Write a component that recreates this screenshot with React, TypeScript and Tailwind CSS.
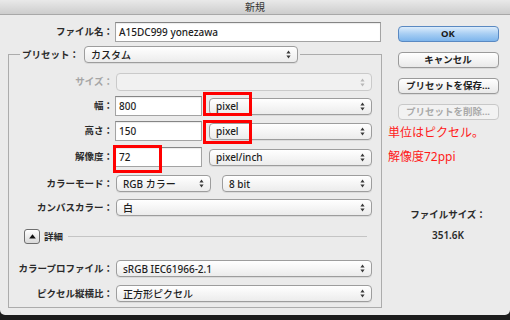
import React from "react";

const Arrows = ({ disabled }: { disabled?: boolean }) => (
  <svg width="5" height="9" viewBox="0 0 5 9" className="shrink-0">
    <path d="M2.5 0.6 L4.6 3.6 H0.4Z M2.5 8.4 L4.6 5.4 H0.4Z" fill={disabled ? "#b8b8b8" : "#3a3a3a"} />
  </svg>
);

const Label = ({ className, children }: { className: string; children: React.ReactNode }) => (
  <span className={`shrink-0 whitespace-nowrap text-[9.5px] font-semibold leading-none ${className}`}>{children}</span>
);

const Select = ({ className, children, disabled }: { className: string; children?: React.ReactNode; disabled?: boolean }) => (
  <div
    className={`flex shrink-0 items-center rounded-[4px] border pl-[6px] pr-[6px] ${
      disabled
        ? "border-[#cacaca] bg-[#f1f1f1]"
        : "border-[#9d9d9d] bg-gradient-to-b from-white to-[#ececec] shadow-[0_1px_0_rgba(0,0,0,0.07)]"
    } ${className}`}
  >
    <span className="flex-1 whitespace-nowrap text-[10px] font-medium leading-none text-[#1e1e1e]">{children}</span>
    <Arrows disabled={disabled} />
  </div>
);

const Input = ({ className, children }: { className: string; children: React.ReactNode }) => (
  <div
    className={`flex shrink-0 items-center border border-[#a3a3a3] border-t-[#858585] bg-white pl-[3px] text-[10px] font-medium leading-none text-[#1e1e1e] shadow-[inset_0_1px_1px_rgba(0,0,0,0.08)] ${className}`}
  >
    {children}
  </div>
);

const Btn = ({ children, kind }: { children: React.ReactNode; kind: "ok" | "normal" | "disabled" }) => {
  const cls =
    kind === "ok"
      ? "border-[#5a89c2] bg-gradient-to-b from-[#dcecfb] via-[#a6cdf3] to-[#7db5ec] text-[#1a1a1a]"
      : kind === "normal"
      ? "border-[#9a9a9a] bg-gradient-to-b from-white to-[#e9e9e9] text-[#1e1e1e] shadow-[0_1px_0_rgba(0,0,0,0.07)]"
      : "border-[#c8c8c8] bg-[#f2f2f2] text-[#a9a9a9]";
  return (
    <div
      className={`flex h-[16px] w-[101px] items-center justify-center rounded-[4px] border text-[9.5px] font-bold leading-none ${cls}`}
    >
      {children}
    </div>
  );
};

export default function App() {
  return (
    <div className="h-[320px] w-[510px] overflow-hidden bg-[#1c1c1c] font-['Noto_Sans','Noto_Sans_CJK_JP',sans-serif] text-[#2a2a2a]">
      <div className="flex h-[315px] flex-col rounded-b-[5px] bg-[#ebebeb]">
        {/* title bar */}
        <div className="flex h-[15px] shrink-0 items-center justify-center border-b border-[#a8a8a8] bg-gradient-to-b from-[#e9e9e9] to-[#cdcdcd] text-[10px] leading-none text-[#333]">
          新規
        </div>

        <div className="flex flex-1">
          {/* left column */}
          <div className="flex w-[386px] flex-col">
            <div className="mt-[7px] flex h-[20px] items-center">
              <Label className="w-[113px] text-right">ファイル名：</Label>
              <Input className="ml-[2px] h-[20px] w-[266px]">A15DC999 yonezawa</Input>
            </div>

            <fieldset className="ml-[8px] mt-[4px] w-[374px] border border-[#acacac] pb-[5px]">
              <legend className="ml-[11px] px-[2px]">
                <div className="flex h-[17px] items-center">
                  <Label className="">プリセット：</Label>
                  <Select className="ml-[5px] h-[17px] w-[214px]">カスタム</Select>
                </div>
              </legend>

              <div className="mt-[10px] flex h-[18px] items-center">
                <Label className="w-[104px] text-right text-[#a5a5a5]">サイズ：</Label>
                <Select disabled className="ml-[3px] h-[18px] w-[256px]" />
              </div>

              <div className="relative mt-[5px] flex h-[20px] items-center">
                <Label className="w-[104px] text-right">幅：</Label>
                <Input className="ml-[2px] h-[20px] w-[87px]">800</Input>
                <Select className="ml-[7px] h-[17px] w-[163px]">pixel</Select>
                <div className="absolute left-[194px] top-[-4px] h-[24px] w-[49px] border-[3px] border-[#ff0000]" />
              </div>

              <div className="relative mt-[5px] flex h-[20px] items-center">
                <Label className="w-[104px] text-right">高さ：</Label>
                <Input className="ml-[2px] h-[20px] w-[87px]">150</Input>
                <Select className="ml-[7px] h-[17px] w-[163px]">pixel</Select>
                <div className="absolute left-[194px] top-[-1px] h-[24px] w-[49px] border-[3px] border-[#ff0000]" />
              </div>

              <div className="relative mt-[6px] flex h-[20px] items-center">
                <Label className="w-[104px] text-right">解像度：</Label>
                <Input className="ml-[2px] h-[20px] w-[87px]">72</Input>
                <Select className="ml-[7px] h-[17px] w-[163px]">pixel/inch</Select>
                <div className="absolute left-[104px] top-[-2px] h-[28px] w-[49px] border-[3px] border-[#ff0000]" />
              </div>

              <div className="mt-[8px] flex h-[17px] items-center">
                <Label className="w-[104px] text-right">カラーモード：</Label>
                <Select className="ml-[3px] h-[17px] w-[95px]">RGB カラー</Select>
                <Select className="ml-[11px] h-[17px] w-[150px]">8 bit</Select>
              </div>

              <div className="mt-[7px] flex h-[17px] items-center">
                <Label className="w-[104px] text-right">カンバスカラー：</Label>
                <Select className="ml-[3px] h-[17px] w-[256px]">白</Select>
              </div>

              <div className="mt-[13px] flex h-[15px] items-center">
                <div className="ml-[15px] flex h-[15px] w-[16px] items-center justify-center rounded-[3px] border border-[#6e6e6e] bg-gradient-to-b from-white to-[#d9d9d9]">
                  <svg width="7" height="5" viewBox="0 0 7 5">
                    <path d="M3.5 0.3 L6.8 4.6 H0.2Z" fill="#111" />
                  </svg>
                </div>
                <Label className="ml-[4px]">詳細</Label>
                <div className="ml-[5px] mr-[14px] h-px flex-1 bg-[#c4c4c4]" />
              </div>

              <div className="mt-[16px] flex h-[17px] items-center">
                <Label className="w-[104px] text-right">カラープロファイル：</Label>
                <Select className="ml-[3px] h-[17px] w-[256px]">sRGB IEC61966-2.1</Select>
              </div>

              <div className="mt-[8px] flex h-[17px] items-center">
                <Label className="w-[104px] text-right">ピクセル縦横比：</Label>
                <Select className="ml-[3px] h-[17px] w-[256px]">正方形ピクセル</Select>
              </div>
            </fieldset>
          </div>

          {/* right column */}
          <div className="flex w-[124px] flex-col items-center">
            <div className="mt-[11px]">
              <Btn kind="ok">OK</Btn>
            </div>
            <div className="mt-[10px]">
              <Btn kind="normal">キャンセル</Btn>
            </div>
            <div className="mt-[10px]">
              <Btn kind="normal">プリセットを保存...</Btn>
            </div>
            <div className="mt-[10px]">
              <Btn kind="disabled">プリセットを削除...</Btn>
            </div>
            <div className="mt-[5px] flex h-[16px] items-center self-start pl-[2px] text-[12px] leading-none text-[#ff1a1a]">
              単位はピクセル。
            </div>
            <div className="mt-[8px] flex h-[16px] items-center self-start pl-[2px] text-[12px] leading-none text-[#ff1a1a]">
              解像度72ppi
            </div>
            <div className="mt-[43px] flex h-[14px] items-center text-[9.5px] font-semibold leading-none">
              ファイルサイズ：
            </div>
            <div className="mt-[6px] flex h-[14px] items-center text-[10px] font-semibold leading-none">
              351.6K
            </div>
          </div>
        </div>
      </div>
    </div>
  );
}
